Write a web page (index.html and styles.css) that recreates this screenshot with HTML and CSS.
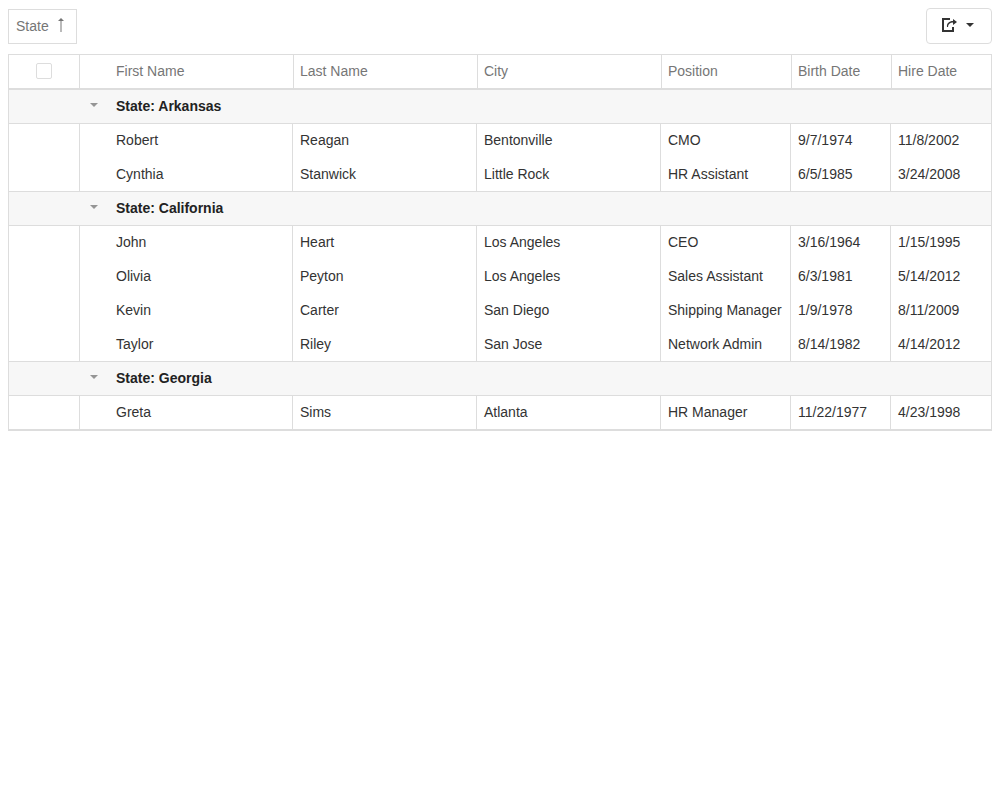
FILE: index.html
```html
<!DOCTYPE html>
<html lang="en">
<head>
<meta charset="utf-8">
<title>Employees</title>
<link rel="stylesheet" href="styles.css">
</head>
<body>
<div class="toolbar">
  <button type="button" class="group-item">State
    <svg class="sort-icon" width="6" height="15" viewBox="0 0 6 15" aria-hidden="true"><path d="M2.500 0h1v1h1v1h1v1h-2v11h-1V3h-2V2h1V1h1z"/></svg>
  </button>
  <button type="button" class="export" aria-label="Export">
    <svg class="export-icon" width="18" height="18" viewBox="0 0 18 18" aria-hidden="true">
      <path d="M2 2H10V4H4V14H12V11H14V16H2Z"/>
      <path d="M7 11C6.500 7.500 9 5 13 5V3L17 6L13 9V6.500C10 6.500 8 8 8 11Z"/>
    </svg>
    <svg class="caret" width="8" height="4" viewBox="0 0 8 4" aria-hidden="true"><path d="M0 0H8L4 4Z"/></svg>
  </button>
</div>
<table class="grid">
  <colgroup>
    <col class="col-select"><col class="col-expand"><col><col><col><col class="col-position"><col class="col-date"><col class="col-date">
  </colgroup>
  <thead>
    <tr>
      <th class="select"><input type="checkbox" class="check" aria-label="Select all"></th>
      <th></th>
      <th class="first" scope="col">First Name</th>
      <th scope="col">Last Name</th>
      <th scope="col">City</th>
      <th scope="col">Position</th>
      <th scope="col">Birth Date</th>
      <th scope="col">Hire Date</th>
    </tr>
  </thead>
  <tbody>
    <tr class="group"><td></td><td class="expand"><button type="button" class="toggle" aria-label="Collapse Arkansas"><svg width="8" height="4" viewBox="0 0 8 4"><path d="M0 0H8L4 4Z"/></svg></button></td><td colspan="6">State: Arkansas</td></tr>
    <tr><td></td><td></td><td>Robert</td><td>Reagan</td><td>Bentonville</td><td>CMO</td><td>9/7/1974</td><td>11/8/2002</td></tr>
    <tr><td></td><td></td><td>Cynthia</td><td>Stanwick</td><td>Little Rock</td><td>HR Assistant</td><td>6/5/1985</td><td>3/24/2008</td></tr>
  </tbody>
  <tbody>
    <tr class="group"><td></td><td class="expand"><button type="button" class="toggle" aria-label="Collapse California"><svg width="8" height="4" viewBox="0 0 8 4"><path d="M0 0H8L4 4Z"/></svg></button></td><td colspan="6">State: California</td></tr>
    <tr><td></td><td></td><td>John</td><td>Heart</td><td>Los Angeles</td><td>CEO</td><td>3/16/1964</td><td>1/15/1995</td></tr>
    <tr><td></td><td></td><td>Olivia</td><td>Peyton</td><td>Los Angeles</td><td>Sales Assistant</td><td>6/3/1981</td><td>5/14/2012</td></tr>
    <tr><td></td><td></td><td>Kevin</td><td>Carter</td><td>San Diego</td><td>Shipping Manager</td><td>1/9/1978</td><td>8/11/2009</td></tr>
    <tr><td></td><td></td><td>Taylor</td><td>Riley</td><td>San Jose</td><td>Network Admin</td><td>8/14/1982</td><td>4/14/2012</td></tr>
  </tbody>
  <tbody>
    <tr class="group"><td></td><td class="expand"><button type="button" class="toggle" aria-label="Collapse Georgia"><svg width="8" height="4" viewBox="0 0 8 4"><path d="M0 0H8L4 4Z"/></svg></button></td><td colspan="6">State: Georgia</td></tr>
    <tr><td></td><td></td><td>Greta</td><td>Sims</td><td>Atlanta</td><td>HR Manager</td><td>11/22/1977</td><td>4/23/1998</td></tr>
  </tbody>
</table>
</body>
</html>
```

FILE: styles.css
```css
* { box-sizing: border-box; }

body {
  margin: 8px;
  background: #fff;
  color: #333;
  font: 14px/18px "Liberation Sans", Arial, sans-serif;
}

button {
  font: inherit;
  cursor: pointer;
}

.toolbar {
  display: flex;
  justify-content: space-between;
  align-items: flex-end;
  margin-bottom: 10px;
}

.group-item {
  display: flex;
  align-items: center;
  gap: 9px;
  height: 35px;
  padding: 0 12px 2px 7px;
  border: 1px solid #ddd;
  background: #fff;
  color: #767676;
}

.sort-icon { fill: #767676; }

.export {
  display: flex;
  align-items: center;
  gap: 8px;
  height: 36px;
  padding: 0 17px 2px 13px;
  border: 1px solid #ddd;
  border-radius: 4px;
  background: #fff;
}

.export-icon,
.caret {
  fill: #333;
}

.grid {
  width: 100%;
  table-layout: fixed;
  border: 1px solid #ddd;
  border-collapse: separate;
  border-spacing: 0;
}

.col-select { width: 70px; }
.col-expand { width: 30px; }
.col-position { width: 130px; }
.col-date { width: 100px; }

th,
td {
  height: 34px;
  padding: 0 7px 2px;
  text-align: left;
  white-space: nowrap;
}

th {
  height: 35px;
  padding-left: 6px;
  border-left: 1px solid #ddd;
  border-bottom: 2px solid #ddd;
  color: #767676;
  font-weight: 400;
}

th.select {
  padding: 0 0 2px;
  border-left: 0;
  text-align: center;
}

th.first {
  padding-left: 7px;
  border-left: 0;
}

td { border-right: 1px solid #ddd; }

td:first-child,
td:last-child { border-right: 0; }

td:nth-child(2) {
  padding: 0;
  border-right: 0;
  border-left: 1px solid #ddd;
}

tbody tr:last-child td { border-bottom: 1px solid #ddd; }

.group td {
  border-bottom: 1px solid #ddd;
  background: #f7f7f7;
  color: #222;
  font-weight: 700;
}

.group td.expand {
  border-left: 0;
  text-align: center;
}

.toggle {
  display: flex;
  align-items: center;
  justify-content: center;
  width: 30px;
  height: 30px;
  padding: 0 0 4px;
  border: 0;
  background: none;
}

.toggle svg { fill: #959595; }

.check {
  display: block;
  width: 16px;
  height: 16px;
  margin: 0 auto;
  appearance: none;
  border: 1px solid #ddd;
  border-radius: 2px;
  background: #fff;
}
```
